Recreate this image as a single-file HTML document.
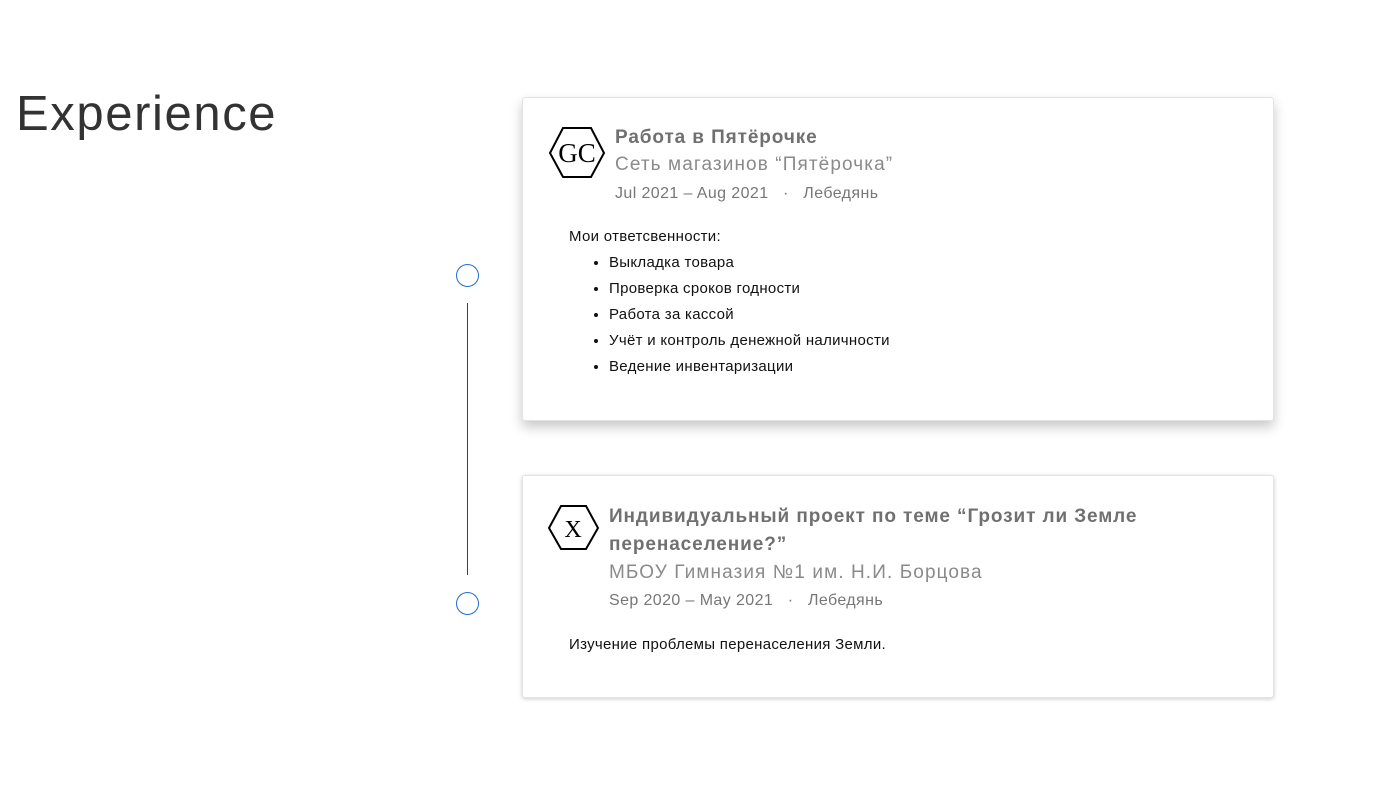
<!DOCTYPE html>
<html><head><meta charset="utf-8"><style>
body{margin:0;width:1382px;height:791px;background:#fff;position:relative;font-family:"Liberation Sans",sans-serif;overflow:hidden}
.h{position:absolute;left:16px;top:86px;font-size:49px;color:#333;font-weight:300;letter-spacing:1.6px}
.card{position:absolute;left:522px;width:752px;background:#fff;border:1px solid #e3e3e3;border-radius:3px;box-sizing:border-box}
.c1{top:97px;height:324px;box-shadow:0 6px 12px rgba(0,0,0,.22)}
.c2{top:475px;height:223px;box-shadow:0 1px 4px rgba(0,0,0,.2)}
.t{position:absolute;font-size:19px;font-weight:bold;color:#707070;line-height:28px;letter-spacing:0.9px}
.s{position:absolute;font-size:19px;color:#8a8a8a;letter-spacing:1.1px}
.d{position:absolute;font-size:16px;color:#777;letter-spacing:0.4px}
.b{position:absolute;font-size:15px;color:#111;line-height:26px;letter-spacing:0.3px}
ul{margin:0;padding-left:40px}
li{height:26px}
.circ{position:absolute;left:456px;width:21px;height:21px;border:1.5px solid #1a6fd6;border-radius:50%}
</style></head><body>
<div class="h">Experience</div>
<div class="circ" style="top:264px"></div>
<div class="circ" style="top:592px"></div>
<div style="position:absolute;left:467px;top:303px;width:1px;height:272px;background:#33435a"></div>
<div class="card c1">
<svg style="position:absolute;left:25px;top:29px" width="58" height="52"><polygon points="15,1 43,1 56,26 43,50 15,50 2,26" fill="none" stroke="#000" stroke-width="2"/><text x="29" y="35" text-anchor="middle" font-family="Liberation Serif" font-size="27">GC</text></svg>
<div class="t" style="left:92px;top:26px">Работа в Пятёрочке</div>
<div class="s" style="left:92px;top:56px">Сеть магазинов “Пятёрочка”</div>
<div class="d" style="left:92px;top:87px">Jul 2021 – Aug 2021 &nbsp; · &nbsp; Лебедянь</div>
<div class="b" style="left:46px;top:126px">Мои ответсвенности:<ul><li>Выкладка товара</li><li>Проверка сроков годности</li><li>Работа за кассой</li><li>Учёт и контроль денежной наличности</li><li>Ведение инвентаризации</li></ul></div>
</div>
<div class="card c2">
<svg style="position:absolute;left:25px;top:29px" width="52" height="46"><polygon points="13,1 38,1 50,23 38,44 13,44 1,23" fill="none" stroke="#000" stroke-width="2"/><text x="25" y="32" text-anchor="middle" font-family="Liberation Serif" font-size="24">X</text></svg>
<div class="t" style="left:86px;top:27px;width:600px">Индивидуальный проект по теме “Грозит ли Земле перенаселение?”</div>
<div class="s" style="left:86px;top:86px">МБОУ Гимназия №1 им. Н.И. Борцова</div>
<div class="d" style="left:86px;top:116px">Sep 2020 – May 2021 &nbsp; · &nbsp; Лебедянь</div>
<div class="b" style="left:46px;top:156px">Изучение проблемы перенаселения Земли.</div>
</div>
</body></html>
